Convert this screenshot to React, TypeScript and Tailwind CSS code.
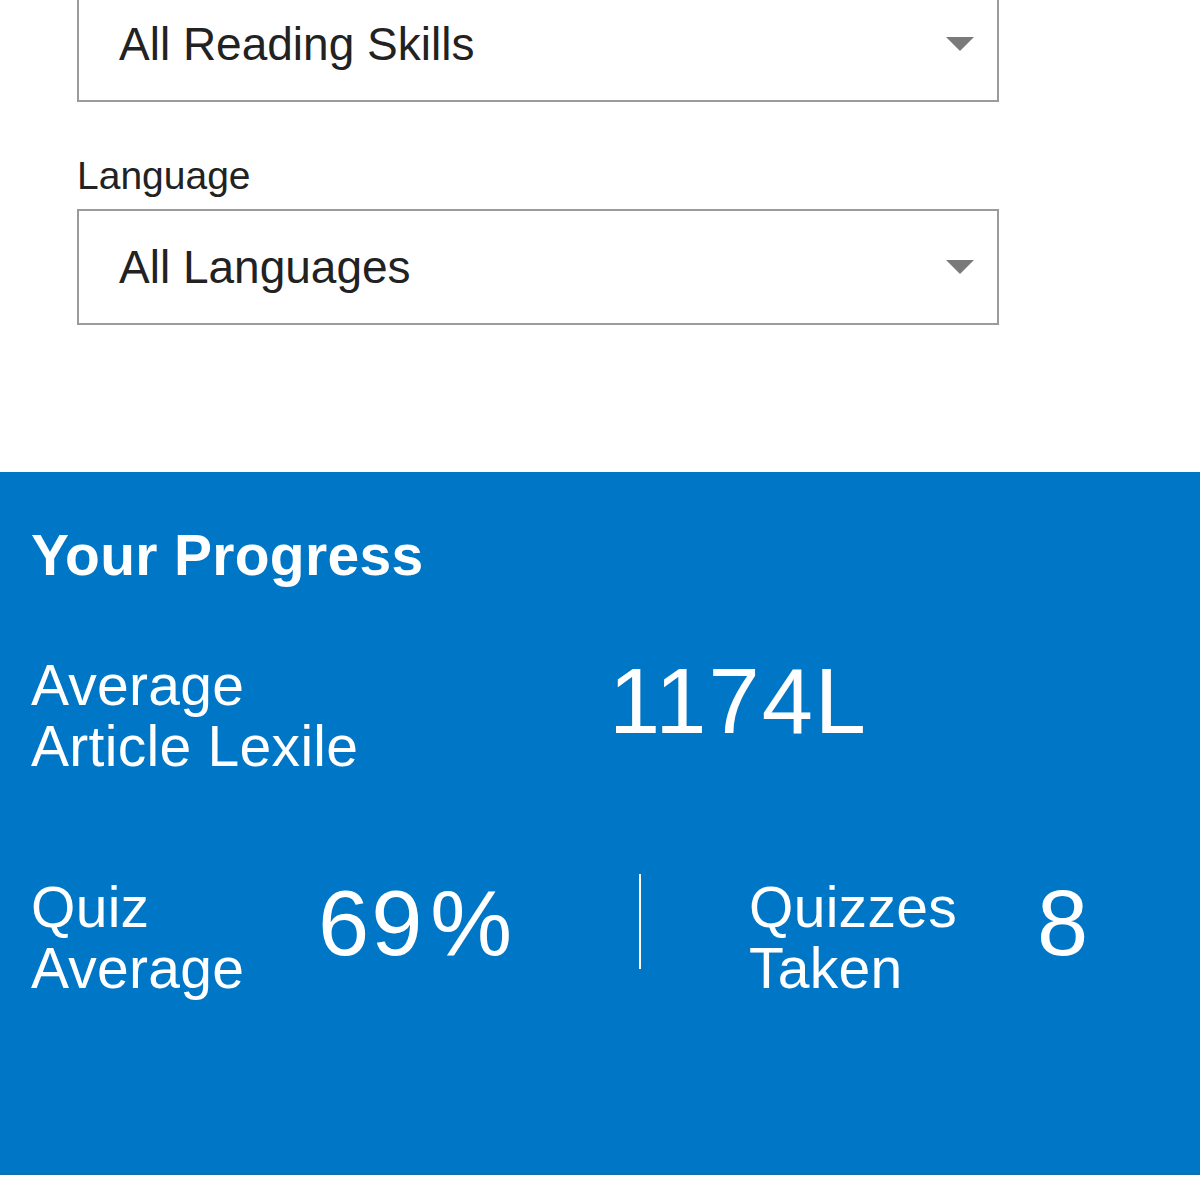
import { ReactNode } from "react";

function Select({ value, className = "" }: { value: string; className?: string }) {
  return (
    <div
      className={`relative flex h-[116px] w-[922px] items-center border-2 border-[#9b9b9b] bg-white pl-[40px] ${className}`}
    >
      <span className="text-[46px] leading-[46px] text-[#222]">{value}</span>
      {/* caret */}
      <svg
        className="absolute right-[23px] top-1/2 -translate-y-1/2"
        width="28"
        height="14"
        viewBox="0 0 28 14"
      >
        <path d="M0 0h28L14 14z" fill="#7a7a7a" />
      </svg>
    </div>
  );
}

function Label({ children, width }: { children: ReactNode; width: string }) {
  return <div className={`${width} shrink-0 text-[57px] leading-[61px] tracking-[0.3px]`}>{children}</div>;
}

function Value({ children }: { children: ReactNode }) {
  return <div className="text-[92px] leading-[92px] tracking-[2px]">{children}</div>;
}

export default function App() {
  return (
    <div className="h-[1200px] w-[1200px] overflow-hidden bg-white font-['Liberation_Sans',Arial,sans-serif]">
      {/* filters */}
      <div className="pl-[77px]">
        <Select value="All Reading Skills" className="-mt-[14px]" />
        <div className="mt-[51px] text-[39px] leading-[45px] text-[#222]">Language</div>
        <Select value="All Languages" className="mt-[11px]" />
      </div>

      {/* progress panel */}
      <section className="mt-[147px] border-b-2 border-[#1b6ca6] bg-[#0076c6] pb-[174px] pl-[31px] pt-[50px] text-white">
        <h2 className="text-[57px] font-bold leading-[67px] tracking-[0.3px]">Your Progress</h2>

        <div className="mt-[66px] flex items-start">
          <Label width="w-[578px]">
            Average
            <br />
            Article Lexile
          </Label>
          <Value>1174L</Value>
        </div>

        <div className="mt-[100px] flex items-start">
          <Label width="w-[287px]">
            Quiz
            <br />
            Average
          </Label>
          <div className="w-[321px] shrink-0">
            <Value>
              69<span className="ml-[6px]">%</span>
            </Value>
          </div>
          <div className="-mt-[3px] h-[95px] w-[2px] shrink-0 bg-white" />
          <div className="w-[108px] shrink-0" />
          <Label width="w-[288px]">
            Quizzes
            <br />
            Taken
          </Label>
          <Value>8</Value>
        </div>
      </section>
    </div>
  );
}
